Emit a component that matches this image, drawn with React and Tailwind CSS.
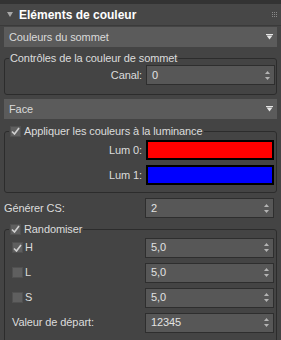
import React from 'react';

const font = { fontFamily: '"Liberation Sans", Arial, sans-serif' };

function DownArrow() {
  return (
    <svg width="7" height="6" viewBox="0 0 7 6" className="shrink-0">
      <rect x="0" y="0" width="7" height="1" fill="#e6e6e6" />
      <path d="M0.5 1.5 L6.5 1.5 L3.5 5.5 Z" fill="#e6e6e6" />
    </svg>
  );
}

function SpinArrows() {
  return (
    <svg width="5" height="9" viewBox="0 0 5 9" className="shrink-0">
      <path d="M2.5 0 L5 3 L0 3 Z" fill="#b4b4b4" />
      <path d="M0 6 L5 6 L2.5 9 Z" fill="#b4b4b4" />
    </svg>
  );
}

function Check({ checked }) {
  return (
    <span className="w-[11px] h-[11px] bg-[#5f5f5f] border border-[#505050] flex items-center justify-center shrink-0">
      {checked && (
        <svg width="9" height="8" viewBox="0 0 9 8">
          <path d="M1 4.5 L3.5 7 L8 1" stroke="#d0d0d0" strokeWidth="1.6" fill="none" />
        </svg>
      )}
    </span>
  );
}

function Spinner({ value }) {
  return (
    <div className="w-[129px] h-[20px] bg-[#575757] border border-[#2e2e2e] flex items-center pl-[5px] pr-[4px] text-[#e2e2e2]">
      <span className="flex-1">{value}</span>
      <SpinArrows />
    </div>
  );
}

function Dropdown({ label }) {
  return (
    <div className="mx-[4px] h-[20px] bg-[#5b5b5b] flex items-center pl-[5px] pr-[4px] text-[#dadada]">
      <span className="flex-1">{label}</span>
      <DownArrow />
    </div>
  );
}

function Group({ legend, children, className = '' }) {
  return (
    <fieldset className={`mx-[4px] border border-[#2c2c2c] rounded-[3px] ${className}`}>
      <legend className="ml-[4px] px-[1px] h-[14px] leading-[14px] flex items-center gap-[3px]">{legend}</legend>
      {children}
    </fieldset>
  );
}

function Row({ label, children }) {
  return (
    <div className="flex items-center h-[20px]">
      <div className="w-[141px] text-right pr-[4px]">{label}</div>
      {children}
    </div>
  );
}

function Swatch({ color }) {
  return <div className={`w-[128px] h-[20px] border-2 border-black ${color}`} />;
}

function RandRow({ checked, label }) {
  return (
    <div className="flex items-center h-[21px]">
      <div className="w-[140px] flex items-center gap-[2px] pl-[7px]">
        <Check checked={checked} />
        <span>{label}</span>
      </div>
      <Spinner value="5,0" />
    </div>
  );
}

export default function App() {
  return (
    <div className="w-[281px] h-[340px] overflow-hidden bg-[#444444] text-[11px] tracking-[-0.1px] text-[#dcdcdc] leading-none" style={font}>
      <div className="h-[4px] bg-[#333333]" />
      <div className="h-[22px] bg-[#474747] border-b border-[#3a3a3a] flex items-center pl-[7px] pr-[3px]">
        <svg width="6" height="5" viewBox="0 0 6 5" className="mr-[6px]">
          <path d="M0 0 L6 0 L3 5 Z" fill="#a8a8a8" />
        </svg>
        <span className="font-bold text-white text-[12px] tracking-normal flex-1">Eléments de couleur</span>
        <svg width="6" height="6" viewBox="0 0 6 6">
          {[0, 2, 4].map((x) => [0, 2, 4].map((y) => <rect key={`${x}${y}`} x={x} y={y} width="1" height="1" fill="#8a8a8a" />))}
        </svg>
      </div>
      <div className="pt-[1px]">
        <Dropdown label="Couleurs du sommet" />
      </div>

      <Group legend={<span>Contrôles de la couleur de sommet</span>} className="mt-[4px] pb-[9px]">
        <Row label="Canal:">
          <Spinner value="0" />
        </Row>
      </Group>

      <div className="mt-[4px]">
        <Dropdown label="Face" />
      </div>

      <Group
        legend={
          <>
            <Check checked />
            <span>Appliquer les couleurs à la luminance</span>
          </>
        }
        className="mt-[5px] pb-[7px]"
      >
        <div className="flex flex-col gap-[5px] mt-[2px]">
          <Row label="Lum 0:">
            <Swatch color="bg-[#ff0000]" />
          </Row>
          <Row label="Lum 1:">
            <Swatch color="bg-[#0000ff]" />
          </Row>
        </div>
      </Group>

      <div className="flex items-center h-[20px] mt-[5px]">
        <div className="w-[145px] pl-[4px]">Générer CS:</div>
        <Spinner value="2" />
      </div>

      <Group
        legend={
          <>
            <Check checked />
            <span>Randomiser</span>
          </>
        }
        className="mt-[4px] pb-[12px]"
      >
        <div className="flex flex-col gap-[4px] mt-[1px]">
          <RandRow checked label="H" />
          <RandRow label="L" />
          <RandRow label="S" />
          <div className="flex items-center h-[21px]">
            <div className="w-[140px] pl-[7px]">Valeur de départ:</div>
            <Spinner value="12345" />
          </div>
        </div>
      </Group>
    </div>
  );
}
